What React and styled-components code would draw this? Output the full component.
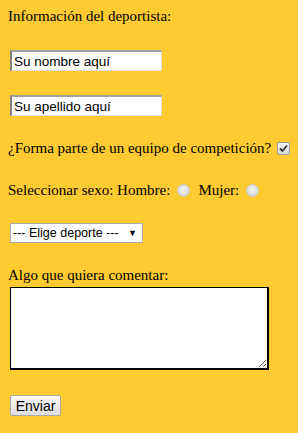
import React from 'react'
import styled, { createGlobalStyle } from 'styled-components'

const GlobalStyle = createGlobalStyle`
  html, body {
    margin: 0;
    padding: 0;
    background: #ffcb30;
  }
  body {
    font-family: "Liberation Serif", "Times New Roman", serif;
    font-size: 15px;
    color: #000;
  }
`

const Form = styled.form`
  display: flex;
  flex-direction: column;
  align-items: flex-start;
  width: 298px;
  height: 433px;
  box-sizing: border-box;
  padding: 7px 0 0 8px;
`

const Row = styled.div`
  display: flex;
  align-items: center;
  height: ${p => p.$h || 18}px;
  margin-top: ${p => p.$mt || 0}px;
  margin-left: ${p => p.$ml || 0}px;
  white-space: nowrap;
  line-height: 18px;
`

const TextInput = styled.input`
  width: 152px;
  height: 21px;
  box-sizing: border-box;
  padding: 1px 2px 0;
  border-style: solid;
  border-width: 2px 1px 1px 2px;
  border-color: #a0a0a0 #dcdcdc #dcdcdc #808080;
  background: #fff;
  font-family: "Liberation Sans", Arial, sans-serif;
  font-size: 13.5px;
  color: #000;
  outline: none;
`

const Check = styled.span`
  display: inline-flex;
  align-items: center;
  justify-content: center;
  width: 11px;
  height: 11px;
  margin-left: 6px;
  border: 1px solid #9c9c9c;
  border-radius: 2px;
  background: linear-gradient(#f4f4f4, #d8d8d8);
`

const Radio = styled.span`
  display: inline-block;
  width: 11px;
  height: 11px;
  margin: 0 8px 0 7px;
  border: 1px solid #c8c8c8;
  border-radius: 50%;
  background: radial-gradient(circle at 50% 40%, #f2f2f2 0%, #dedede 60%, #cfcfcf 100%);
`

const Select = styled.div`
  display: flex;
  align-items: center;
  width: 133px;
  height: 20px;
  box-sizing: border-box;
  padding: 0 0 0 2px;
  border: 1px solid #a9a9a9;
  background: #fff;
  font-family: "Liberation Sans", Arial, sans-serif;
  font-size: 12.5px;
`

const Arrow = styled.span`
  margin-left: auto;
  margin-right: 5px;
  font-size: 9px;
`

const TextArea = styled.textarea`
  width: 259px;
  height: 83px;
  box-sizing: border-box;
  border: 1px solid #000;
  border-width: 1px 2px 2px 1px;
  background: #fff;
  resize: both;
  outline: none;
`

const Button = styled.button`
  width: 51px;
  height: 21px;
  padding: 0;
  border: 1px solid #a8a8a8;
  border-radius: 2px;
  background: linear-gradient(#fbfbfb, #dedede);
  font-family: "Liberation Sans", Arial, sans-serif;
  font-size: 14px;
  color: #000;
`

export default function App() {
  return (
    <>
      <GlobalStyle />
      <Form onSubmit={e => e.preventDefault()}>
        <Row>Información del deportista:</Row>
        <Row $h={21} $mt={25} $ml={2}>
          <TextInput defaultValue="Su nombre aquí" />
        </Row>
        <Row $h={21} $mt={24} $ml={2}>
          <TextInput defaultValue="Su apellido aquí" />
        </Row>
        <Row $mt={23}>
          ¿Forma parte de un equipo de competición?
          <Check>
            <svg width="9" height="9" viewBox="0 0 9 9">
              <path d="M1 4.5 L3.5 7 L8 1.5" fill="none" stroke="#333" strokeWidth="1.8" />
            </svg>
          </Check>
        </Row>
        <Row $mt={24}>
          Seleccionar sexo: Hombre:
          <Radio />
          Mujer:
          <Radio />
        </Row>
        <Row $h={20} $mt={24} $ml={2}>
          <Select>
            --- Elige deporte ---
            <Arrow>▼</Arrow>
          </Select>
        </Row>
        <Row $mt={23}>Algo que quiera comentar:</Row>
        <Row $h={83} $mt={3} $ml={2}>
          <TextArea />
        </Row>
        <Row $h={21} $mt={25} $ml={2}>
          <Button type="submit">Enviar</Button>
        </Row>
      </Form>
    </>
  )
}
